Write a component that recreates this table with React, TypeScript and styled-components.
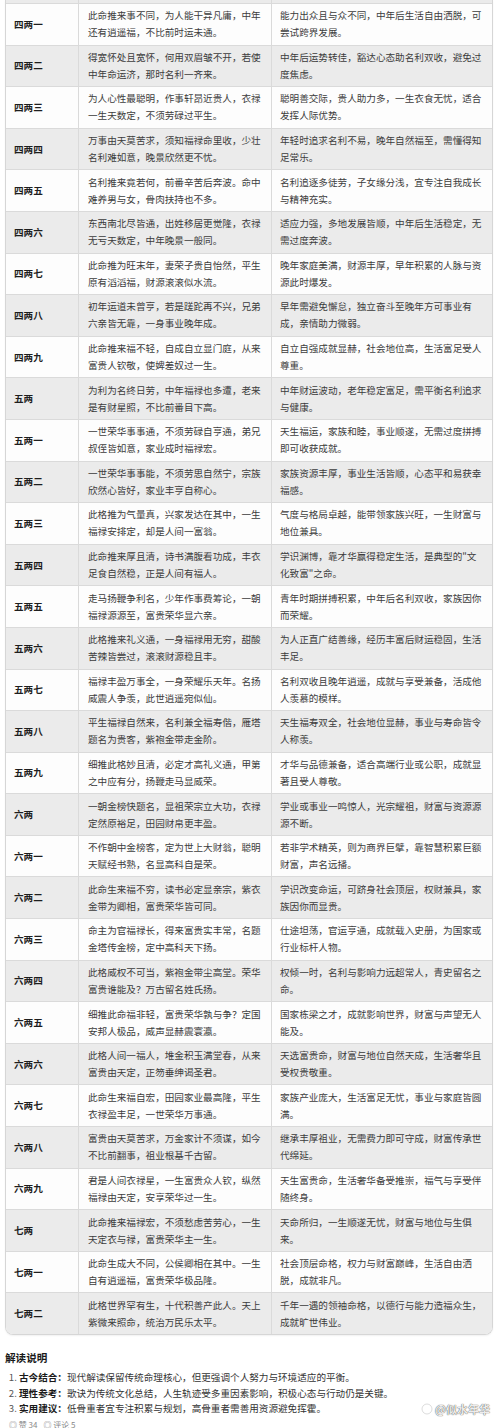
import React from 'react';
import styled, { createGlobalStyle } from 'styled-components';

const GlobalStyle = createGlobalStyle`
  html, body {
    margin: 0;
    padding: 0;
    background: #ffffff;
  }
  body {
    font-family: "Noto Sans CJK SC", "Noto Sans", sans-serif;
    color: #333;
  }
`;

const Page = styled.div`
  position: relative;
  width: 500px;
  height: 1428px;
  overflow: hidden;
  padding: 0 7px 0 5px;
  box-sizing: border-box;
`;

const Table = styled.div`
  border: 1px solid #d6d6d6;
  border-top: none;
  border-radius: 0 0 8px 8px;
  overflow: hidden;
  box-shadow: 0 1px 2px rgba(0, 0, 0, 0.06);
`;

const Row = styled.div<{ $shade: boolean; $cut?: boolean }>`
  display: grid;
  grid-template-columns: 72px 193px 1fr;
  background: ${p => (p.$shade ? '#ebebeb' : '#fdfdfd')};
  border-bottom: 1px solid #dadada;
  height: ${p => (p.$cut ? '3px' : 'auto')};
  &:last-child {
    border-bottom: none;
  }
`;

const Cell = styled.div<{ $pad: number }>`
  padding: 3.3px ${p => p.$pad}px 3.3px ${p => p.$pad}px;
  font-size: 9.6px;
  line-height: 17px;
  color: #3c3c3c;
  border-left: 1px solid #dadada;
  display: flex;
  align-items: center;
  &:first-child {
    border-left: none;
  }
`;

const LabelCell = styled(Cell)`
  font-weight: 700;
  color: #1e1e1e;
`;

const Notes = styled.div`
  padding: 15px 0 0 0;
`;

const NotesTitle = styled.div`
  font-size: 10.6px;
  font-weight: 700;
  color: #1a1a1a;
  line-height: 16px;
  margin-bottom: 4px;
`;

const NoteList = styled.ol`
  margin: 0;
  padding: 0 0 0 14px;
  font-size: 9.6px;
  color: #333;
`;

const NoteItem = styled.li`
  line-height: 15.5px;
  height: 15.5px;
  &::marker {
    color: #555;
  }
`;

const NoteLabel = styled.span`
  font-weight: 700;
  color: #1a1a1a;
`;

const Footer = styled.div`
  display: flex;
  align-items: center;
  gap: 6px;
  padding: 3px 0 0 4px;
  font-size: 8px;
  line-height: 10px;
  color: #888;
`;

const Watermark = styled.div`
  position: absolute;
  right: 10px;
  top: 1401px;
  display: flex;
  align-items: center;
  gap: 2px;
  font-size: 11px;
  font-weight: 700;
  color: rgba(255, 255, 255, 0.92);
  text-shadow: 0 0 1px rgba(0, 0, 0, 0.55), 0 0 1px rgba(0, 0, 0, 0.55);
`;

const rows: [string, string, string][] = [
  ['四两一', '此命推来事不同，为人能干异凡庸，中年还有逍遥福，不比前时运未通。', '能力出众且与众不同，中年后生活自由洒脱，可尝试跨界发展。'],
  ['四两二', '得宽怀处且宽怀，何用双眉皱不开，若使中年命运济，那时名利一齐来。', '中年后运势转佳，豁达心态助名利双收，避免过度焦虑。'],
  ['四两三', '为人心性最聪明，作事轩昂近贵人，衣禄一生天数定，不须劳碌过平生。', '聪明善交际，贵人助力多，一生衣食无忧，适合发挥人际优势。'],
  ['四两四', '万事由天莫苦求，须知福禄命里收，少壮名利难如意，晚景欣然更不忧。', '年轻时追求名利不易，晚年自然福至，需懂得知足常乐。'],
  ['四两五', '名利推来竟若何，前番辛苦后奔波。命中难养男与女，骨肉扶持也不多。', '名利追逐多徒劳，子女缘分浅，宜专注自我成长与精神充实。'],
  ['四两六', '东西南北尽皆通，出姓移居更觉隆，衣禄无亏天数定，中年晚景一般同。', '适应力强，多地发展皆顺，中年后生活稳定，无需过度奔波。'],
  ['四两七', '此命推为旺末年，妻荣子贵自怡然，平生原有滔滔福，财源滚滚似水流。', '晚年家庭美满，财源丰厚，早年积累的人脉与资源此时爆发。'],
  ['四两八', '初年运道未曾亨，若是蹉跎再不兴，兄弟六亲皆无靠，一身事业晚年成。', '早年需避免懈怠，独立奋斗至晚年方可事业有成，亲情助力微弱。'],
  ['四两九', '此命推来福不轻，自成自立显门庭，从来富贵人钦敬，使婢差奴过一生。', '自立自强成就显赫，社会地位高，生活富足受人尊重。'],
  ['五两', '为利为名终日劳，中年福禄也多遭，老来是有财星照，不比前番目下高。', '中年财运波动，老年稳定富足，需平衡名利追求与健康。'],
  ['五两一', '一世荣华事事通，不须劳碌自亨通，弟兄叔侄皆如意，家业成时福禄宏。', '天生福运，家族和睦，事业顺遂，无需过度拼搏即可收获成就。'],
  ['五两二', '一世荣华事事能，不须劳思自然宁，宗族欣然心皆好，家业丰亨自称心。', '家族资源丰厚，事业生活皆顺，心态平和易获幸福感。'],
  ['五两三', '此格推为气量真，兴家发达在其中，一生福禄安排定，却是人间一富翁。', '气度与格局卓越，能带领家族兴旺，一生财富与地位兼具。'],
  ['五两四', '此命推来厚且清，诗书满腹看功成，丰衣足食自然稳，正是人间有福人。', '学识渊博，靠才华赢得稳定生活，是典型的"文化致富"之命。'],
  ['五两五', '走马扬鞭争利名，少年作事费筹论，一朝福禄源源至，富贵荣华显六亲。', '青年时期拼搏积累，中年后名利双收，家族因你而荣耀。'],
  ['五两六', '此格推来礼义通，一身福禄用无穷，甜酸苦辣皆尝过，滚滚财源稳且丰。', '为人正直广结善缘，经历丰富后财运稳固，生活丰足。'],
  ['五两七', '福禄丰盈万事全，一身荣耀乐天年。名扬威震人争羡，此世逍遥宛似仙。', '名利双收且晚年逍遥，成就与享受兼备，活成他人羡慕的模样。'],
  ['五两八', '平生福禄自然来，名利兼全福寿偕，雁塔题名为贵客，紫袍金带走金阶。', '天生福寿双全，社会地位显赫，事业与寿命皆令人称羡。'],
  ['五两九', '细推此格妙且清，必定才高礼义通，甲第之中应有分，扬鞭走马显威荣。', '才华与品德兼备，适合高端行业或公职，成就显著且受人尊敬。'],
  ['六两', '一朝金榜快题名，显祖荣宗立大功，衣禄定然原裕足，田园财帛更丰盈。', '学业或事业一鸣惊人，光宗耀祖，财富与资源源源不断。'],
  ['六两一', '不作朝中金榜客，定为世上大财翁，聪明天赋经书熟，名显高科自是荣。', '若非学术精英，则为商界巨擘，靠智慧积累巨额财富，声名远播。'],
  ['六两二', '此命生来福不穷，读书必定显亲宗，紫衣金带为卿相，富贵荣华皆可同。', '学识改变命运，可跻身社会顶层，权财兼具，家族因你而显贵。'],
  ['六两三', '命主为官福禄长，得来富贵实丰常，名题金塔传金榜，定中高科天下扬。', '仕途坦荡，官运亨通，成就载入史册，为国家或行业标杆人物。'],
  ['六两四', '此格威权不可当，紫袍金带尘高堂。荣华富贵谁能及？万古留名姓氏扬。', '权倾一时，名利与影响力远超常人，青史留名之命。'],
  ['六两五', '细推此命福非轻，富贵荣华孰与争？定国安邦人极品，威声显赫震寰瀛。', '国家栋梁之才，成就影响世界，财富与声望无人能及。'],
  ['六两六', '此格人间一福人，堆金积玉满堂春，从来富贵由天定，正笏垂绅谒圣君。', '天选富贵命，财富与地位自然天成，生活奢华且受权贵敬重。'],
  ['六两七', '此命生来福自宏，田园家业最高隆，平生衣禄盈丰足，一世荣华万事通。', '家族产业庞大，生活富足无忧，事业与家庭皆圆满。'],
  ['六两八', '富贵由天莫苦求，万金家计不须谋，如今不比前翻事，祖业根基千古留。', '继承丰厚祖业，无需费力即可守成，财富传承世代绵延。'],
  ['六两九', '君是人间衣禄星，一生富贵众人钦，纵然福禄由天定，安享荣华过一生。', '天生富贵命，生活奢华备受推崇，福气与享受伴随终身。'],
  ['七两', '此命推来福禄宏，不须愁虑苦劳心，一生天定衣与禄，富贵荣华主一生。', '天命所归，一生顺遂无忧，财富与地位与生俱来。'],
  ['七两一', '此命生成大不同，公侯卿相在其中。一生自有逍遥福，富贵荣华极品隆。', '社会顶层命格，权力与财富巅峰，生活自由洒脱，成就非凡。'],
  ['七两二', '此格世界罕有生，十代积善产此人。天上紫微来照命，统治万民乐太平。', '千年一遇的领袖命格，以德行与能力造福众生，成就旷世伟业。'],
];

const notes: [string, string][] = [
  ['古今结合：', '现代解读保留传统命理核心，但更强调个人努力与环境适应的平衡。'],
  ['理性参考：', '歌诀为传统文化总结，人生轨迹受多重因素影响，积极心态与行动仍是关键。'],
  ['实用建议：', '低骨重者宜专注积累与规划，高骨重者需善用资源避免挥霍。'],
];

const LogoIcon = () => (
  <svg width="12" height="12" viewBox="0 0 12 12">
    <circle cx="6" cy="6" r="5" fill="none" stroke="rgba(255,255,255,0.95)" strokeWidth="1.6" />
    <circle cx="6" cy="6" r="5" fill="none" stroke="rgba(0,0,0,0.35)" strokeWidth="0.4" />
    <path d="M3.5 6.5 L6 4 L8.5 6.5" fill="none" stroke="rgba(255,255,255,0.95)" strokeWidth="1.4" />
  </svg>
);

export default function App() {
  return (
    <>
      <GlobalStyle />
      <Page>
        <Table>
          <Row $shade $cut>
            <Cell $pad={0} />
            <Cell $pad={0} />
            <Cell $pad={0} />
          </Row>
          {rows.map(([label, verse, meaning], i) => (
            <Row key={label} $shade={i % 2 === 1}>
              <LabelCell $pad={8}>{label}</LabelCell>
              <Cell $pad={9}>{verse}</Cell>
              <Cell $pad={8}>{meaning}</Cell>
            </Row>
          ))}
        </Table>
        <Notes>
          <NotesTitle>解读说明</NotesTitle>
          <NoteList>
            {notes.map(([label, text]) => (
              <NoteItem key={label}>
                <NoteLabel>{label}</NoteLabel>
                {text}
              </NoteItem>
            ))}
          </NoteList>
        </Notes>
        <Footer>
          <span>◎ 赞 34</span>
          <span>◎ 评论 5</span>
        </Footer>
        <Watermark>
          <LogoIcon />
          <span>@似水年华</span>
        </Watermark>
      </Page>
    </>
  );
}
